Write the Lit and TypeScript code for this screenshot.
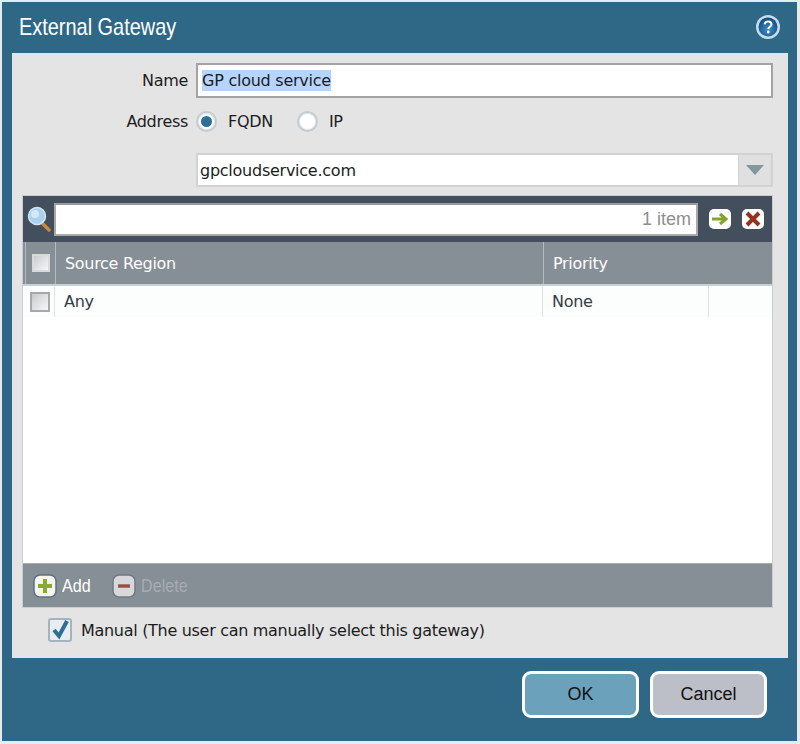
import { LitElement, html, css } from "lit";
import { customElement } from "lit/decorators.js";

@customElement("app-root")
export class AppRoot extends LitElement {
  static styles = css`
    :host { display: block; width: 800px; height: 744px; background: #e8eaeb; box-sizing: border-box; padding: 2px 3px 3px 2px; font-family: "DejaVu Sans", sans-serif; color: #1c1c1c; overflow: hidden; }
    .dialog { height: 739px; box-sizing: border-box; background: #2f6886; padding: 0 9px 0 10px; display: flex; flex-direction: column; }
    .head { height: 51px; flex: none; display: flex; align-items: center; justify-content: space-between; padding: 0 7px 0 7px; }
    .title { color: #fff; font-size: 24px; font-family: "Liberation Sans", sans-serif; display: inline-block; transform: scaleX(0.83); transform-origin: left; white-space: nowrap; margin-top: -1px; }
    .help { margin-top: -2px; display: block; }
    .panel { height: 605px; flex: none; box-sizing: border-box; background: #e4e4e4; padding: 10px 15px 0 10px; display: flex; flex-direction: column; }
    .row { display: grid; grid-template-columns: 166px 1fr; column-gap: 8px; align-items: center; font-size: 16px; }
    .lbl { text-align: right; font-size: 16px; letter-spacing: -0.3px; }
    .input { height: 35px; box-sizing: border-box; background: #fff; border: 2px solid #a3a3a3; padding-left: 4px; display: flex; align-items: center; letter-spacing: -0.25px; }
    .sel { background: #b5d5ff; padding: 0; line-height: 21px; }
    .addr { margin-top: 6px; height: 35px; }
    .radios { display: flex; align-items: center; }
    .radio { width: 21px; height: 21px; box-sizing: border-box; border-radius: 50%; border: 2px solid #c3ccd0; background: #fff; display: flex; align-items: center; justify-content: center; box-shadow: inset 0 0 0 1px #e0e6e8; }
    .radio i { width: 11px; height: 11px; border-radius: 50%; background: #2f6f96; display: block; }
    .rt { margin: 0 24px 0 11px; letter-spacing: -0.3px; }
    .combo { margin-top: 14px; }
    .cbox { height: 34px; box-sizing: border-box; display: flex; border: 2px solid #d2d2d2; background: #fff; }
    .cval { flex: 1; padding-left: 2px; display: flex; align-items: center; letter-spacing: -0.25px; border-right: 1px solid #d2d2d2; }
    .carrow { width: 32px; background: #e0e0e0; display: flex; align-items: center; justify-content: center; }
    .grid { margin-top: 8px; height: 413px; box-sizing: border-box; flex: none; border: 1px solid #c8ced2; border-top-color: #c8ced2; display: flex; flex-direction: column; background: #fff; }
    .tools { height: 46px; flex: none; background: #434f5c; display: flex; align-items: center; padding: 0 8px 0 4px; }
    .search { flex: 1; margin-left: 3px; height: 33px; box-sizing: border-box; background: #fff; border: 2px solid #a9a9a9; border-top-color: #9a9a9a; display: flex; align-items: center; justify-content: flex-end; padding-right: 5px; color: #8e8e8e; font-family: "Liberation Sans", sans-serif; font-size: 18px; }
    .tbtn { display: block; margin-left: 11px; }
    .tbtn:first-of-type { margin-left: 11px; }
    .thead { height: 44px; flex: none; background: #868e96; color: #fff; display: grid; grid-template-columns: 32px 488px 1fr; font-size: 16px; letter-spacing: -0.3px; border-bottom: 2px solid #c9cfd3; box-sizing: border-box; }
    .thead > div { display: flex; align-items: center; padding-left: 9px; border-left: 1px solid #b4bac0; }
    .thead > div:first-child { padding-left: 6px; margin-left: 2px; }
    .trow { height: 31px; flex: none; background: #fcfdfd; display: grid; grid-template-columns: 32px 488px 166px; font-size: 16px; letter-spacing: -0.3px; color: #333c44; }
    .trow > div { display: flex; align-items: center; padding-left: 9px; border-right: 1px solid #e0e3e5; box-sizing: border-box; }
    .trow > div:first-child { padding-left: 7px; }
    .trow > div:nth-child(2) { padding-left: 9px; }
    .cb { width: 20px; height: 20px; box-sizing: border-box; border: 2px solid #a8a8a8; background: linear-gradient(135deg, #c8cbce, #f7f7f7); }
    .cbh { width: 18px; height: 18px; border-color: #d8dadc; }
    .spacer { flex: 1; }
    .foot { height: 44px; flex: none; background: #868e96; border-top: 1px solid #a8adb3; box-sizing: border-box; display: flex; align-items: center; padding-left: 10px; font-size: 18px; color: #fff; font-family: "Liberation Sans", sans-serif; }
    .ftext { display: inline-block; transform: scaleX(0.85); transform-origin: left; width: 38px; font-size: 19px; }
    .dis { color: #a6acb2; margin-left: 0; }
    .fgap { margin-left: 5px; }
    .manual { display: flex; align-items: center; margin: 10px 0 0 26px; font-size: 16px; letter-spacing: -0.3px; }
    .manual span { margin-left: 9px; }
    .btns { flex: 1; display: flex; justify-content: flex-end; align-items: flex-start; gap: 11px; padding: 13px 21px 0 0; }
    .btn { width: 117px; height: 47px; box-sizing: border-box; border: 3px solid #fff; border-radius: 9px; font-family: "Liberation Sans", sans-serif; font-size: 18px; display: flex; align-items: center; justify-content: center; color: #111; background: #bcbfc7; }
    .ok { background: #6ba1ba; }
  `;

  render() {
    return html`<div class="dialog">
      <div class="head">
        <span class="title">External Gateway</span>
        <svg class="help" width="26" height="26" viewBox="0 0 26 26">
          <defs><radialGradient id="hg" cx="50%" cy="65%" r="60%"><stop offset="0" stop-color="#3f8fc4"/><stop offset="1" stop-color="#0f4f86"/></radialGradient></defs>
          <circle cx="13" cy="13" r="12" fill="#c6dce8"/>
          <circle cx="13" cy="13" r="9.5" fill="url(#hg)"/>
          <path d="M9.6 10.4c.3-2 1.7-2.9 3.5-2.9 2 0 3.4 1.1 3.4 2.8 0 2.4-3 2.5-3.2 4.8" fill="none" stroke="#fff" stroke-width="2.1"/>
          <circle cx="13.2" cy="18" r="1.4" fill="#fff"/>
        </svg>
      </div>
      <div class="panel">
        <div class="row"><div class="lbl">Name</div><div class="input"><span class="sel">GP cloud service</span></div></div>
        <div class="row addr"><div class="lbl">Address</div>
          <div class="radios">
            <div class="radio"><i></i></div><span class="rt">FQDN</span>
            <div class="radio"></div><span class="rt">IP</span>
          </div>
        </div>
        <div class="row combo"><div></div>
          <div class="cbox"><div class="cval">gpcloudservice.com</div>
            <div class="carrow"><svg width="18" height="10" viewBox="0 0 18 10"><path d="M0 0H18L9 10Z" fill="#84969f"/></svg></div>
          </div>
        </div>
        <div class="grid">
          <div class="tools">
            <svg width="24" height="26" viewBox="0 0 24 26">
              <path d="M15 17L22 24" stroke="#c98a45" stroke-width="3.4" stroke-linecap="round"/>
              <circle cx="10" cy="10" r="8.5" fill="#a9d0ee" stroke="#d6e6f3" stroke-width="1.5"/>
              <circle cx="8" cy="8" r="4" fill="#d4e8f8"/>
            </svg>
            <div class="search">1 item</div>
            <svg class="tbtn" width="22" height="20" viewBox="0 0 22 20">
              <rect x="0" y="0" width="22" height="20" rx="5" fill="#fff"/>
              <path d="M3 10H15M11 5L17 10L11 15" fill="none" stroke="#82a42b" stroke-width="3"/>
            </svg>
            <svg class="tbtn" width="22" height="20" viewBox="0 0 22 20">
              <rect x="0" y="0" width="22" height="20" rx="5" fill="#fff"/>
              <path d="M5 4L17 16M17 4L5 16" fill="none" stroke="#94321e" stroke-width="4"/>
            </svg>
          </div>
          <div class="thead"><div><span class="cb cbh"></span></div><div>Source Region</div><div>Priority</div></div>
          <div class="trow"><div><span class="cb"></span></div><div>Any</div><div>None</div></div>
          <div class="spacer"></div>
          <div class="foot">
            <svg width="24" height="24" viewBox="0 0 24 24"><rect x="1" y="1" width="22" height="22" rx="6" fill="#f3f5ee" stroke="#5d7180" stroke-width="1.5"/><path d="M12 5V19M5 12H19" stroke="#8aa92f" stroke-width="4"/></svg>
            <span class="ftext fgap">Add</span>
            <svg style="margin-left:12px" width="24" height="24" viewBox="0 0 24 24"><rect x="1" y="1" width="22" height="22" rx="6" fill="#d6d8dc" stroke="#6f7a84" stroke-width="1.5"/><path d="M6 12H18" stroke="#94503f" stroke-width="3.4"/></svg>
            <span class="ftext dis fgap">Delete</span>
          </div>
        </div>
        <div class="manual">
          <svg width="24" height="24" viewBox="0 0 24 24"><rect x="1" y="1" width="22" height="22" rx="2" fill="#e8edf0" stroke="#a4b4bf" stroke-width="2"/><path d="M6 12L11 18L19 3" fill="none" stroke="#2f6f96" stroke-width="4"/></svg>
          <span>Manual (The user can manually select this gateway)</span>
        </div>
      </div>
      <div class="btns"><div class="btn ok">OK</div><div class="btn">Cancel</div></div>
    </div>`;
  }
}
